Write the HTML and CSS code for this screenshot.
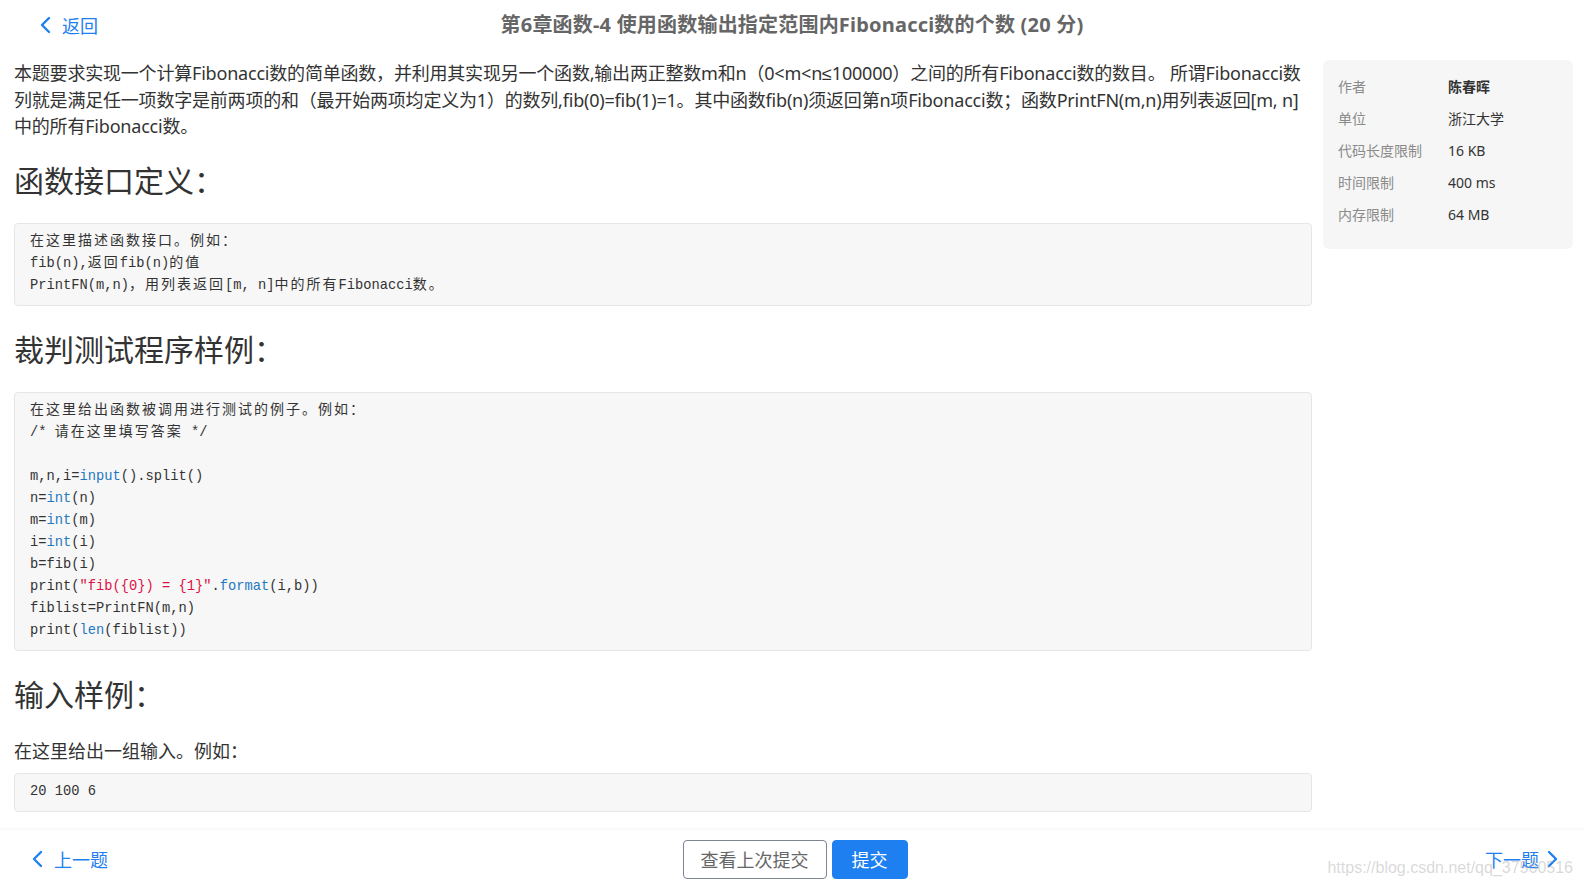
FILE: index.html
```html
<!DOCTYPE html>
<html lang="zh-CN">
<head>
<meta charset="utf-8">
<title>第6章函数-4 使用函数输出指定范围内Fibonacci数的个数</title>
<link rel="stylesheet" href="styles.css">
</head>
<body>
<div class="page">
  <header class="topbar">
    <a class="back-link" href="#">
      <svg class="chev" width="11" height="18" viewBox="0 0 11 18"><polyline points="9,2 2,9 9,16" fill="none" stroke="currentColor" stroke-width="2.4" stroke-linecap="round" stroke-linejoin="round"/></svg>
      <span>返回</span>
    </a>
    <h1 class="title">第6章函数-4 使用函数输出指定范围内Fibonacci数的个数 (20 分)</h1>
    <div></div>
  </header>

  <div class="content">
    <main class="problem">
      <p class="text lead">本题要求实现一个计算Fibonacci数的简单函数，并利用其实现另一个函数,输出两正整数m和n（0&lt;m&lt;n<span class="sym">≤</span>100000）之间的所有Fibonacci数的数目。 所谓Fibonacci数列就是满足任一项数字是前两项的和（最开始两项均定义为1）的数列,fib(0)=fib(1)=1。其中函数fib(n)须返回第n项Fibonacci数；函数PrintFN(m,n)用列表返回[m, n]中的所有Fibonacci数。</p>

      <h2 class="section">函数接口定义<span class="colon">：</span></h2>
      <pre class="code"><span class="zh">在这里描述函数接口。例如：</span>
fib(n),<span class="zh">返回</span>fib(n)<span class="zh">的值</span>
PrintFN(m,n)<span class="zh">，用列表返回</span>[m, n]<span class="zh">中的所有</span>Fibonacci<span class="zh">数。</span></pre>

      <h2 class="section">裁判测试程序样例<span class="colon">：</span></h2>
      <pre class="code"><span class="zh">在这里给出函数被调用进行测试的例子。例如：</span>
/* <span class="zh">请在这里填写答案</span> */

m,n,i=<span class="bi">input</span>().split()
n=<span class="bi">int</span>(n)
m=<span class="bi">int</span>(m)
i=<span class="bi">int</span>(i)
b=fib(i)
print(<span class="str">"fib({0}) = {1}"</span>.<span class="bi">format</span>(i,b))
fiblist=PrintFN(m,n)
print(<span class="bi">len</span>(fiblist))</pre>

      <h2 class="section">输入样例<span class="colon">：</span></h2>
      <p class="text sample-desc">在这里给出一组输入。例如：</p>
      <pre class="code">20 100 6</pre>
    </main>

    <aside class="info">
      <dl class="info-list">
        <div class="info-row"><dt>作者</dt><dd class="strong">陈春晖</dd></div>
        <div class="info-row"><dt>单位</dt><dd>浙江大学</dd></div>
        <div class="info-row"><dt>代码长度限制</dt><dd>16 KB</dd></div>
        <div class="info-row"><dt>时间限制</dt><dd>400 ms</dd></div>
        <div class="info-row"><dt>内存限制</dt><dd>64 MB</dd></div>
      </dl>
    </aside>
  </div>

  <footer class="bottombar">
    <a class="nav-link prev" href="#">
      <svg class="chev" width="11" height="18" viewBox="0 0 11 18"><polyline points="9,2 2,9 9,16" fill="none" stroke="currentColor" stroke-width="2.4" stroke-linecap="round" stroke-linejoin="round"/></svg>
      <span>上一题</span>
    </a>
    <div class="actions">
      <button class="btn btn-default" type="button">查看上次提交</button>
      <button class="btn btn-primary" type="button">提交</button>
    </div>
    <a class="nav-link next" href="#">
      <span>下一题</span>
      <svg class="chev" width="11" height="18" viewBox="0 0 11 18"><polyline points="2,2 9,9 2,16" fill="none" stroke="currentColor" stroke-width="2.4" stroke-linecap="round" stroke-linejoin="round"/></svg>
    </a>
  </footer>

  <div class="watermark">https://blog.csdn.net/qq_37560516</div>
</div>
</body>
</html>
```

FILE: styles.css
```css
* { box-sizing: border-box; }

html, body {
  margin: 0;
  padding: 0;
  background: #ffffff;
}

body {
  font-family: "Noto Sans", "Noto Sans CJK SC", sans-serif;
  color: #333333;
}

.page {
  position: relative;
  height: 100vh;
  display: flex;
  flex-direction: column;
  overflow: hidden;
}

/* ---------- top bar ---------- */
.topbar {
  height: 50px;
  flex: none;
  display: grid;
  grid-template-columns: 1fr auto 1fr;
  align-items: center;
  padding: 0 40px;
}

.back-link {
  display: flex;
  align-items: center;
  gap: 11px;
  color: #1f80f0;
  text-decoration: none;
  font-size: 18px;
  line-height: 24px;
  font-family: "Noto Sans CJK SC", sans-serif;
}

.chev { display: block; flex: none; }

.title {
  margin: 0;
  font-size: 20px;
  font-weight: 700;
  color: #666666;
  line-height: 50px;
  letter-spacing: 0.2px;
  white-space: nowrap;
  font-family: "Noto Sans", "Noto Sans CJK SC", sans-serif;
}

/* ---------- content ---------- */
.content {
  flex: 1;
  min-height: 0;
  display: flex;
  gap: 11px;
  padding: 10px 11px 0 14px;
}

.problem {
  flex: 1;
  min-width: 0;
}

.text {
  margin: 0;
  font-size: 18px;
  line-height: 26px;
  color: #333333;
}

.lead {
  letter-spacing: -0.2px;
}

.sym {
  font-family: "Liberation Sans", Arial, sans-serif;
}

.section {
  margin: 19px 0 23px;
  font-size: 30px;
  line-height: 42px;
  font-weight: 400;
  color: #333333;
  font-family: "Noto Sans CJK SC", sans-serif;
}

.code + .section {
  margin-top: 21px;
}

.section .colon {
  font-family: "Noto Sans CJK TC", "Noto Sans CJK SC", sans-serif;
}

.sample-desc {
  margin: 24px 0 9px;
}

.code {
  margin: 0;
  padding: 7px 15px 8px;
  background: #f7f7f7;
  border: 1px solid #e6e6e6;
  border-radius: 4px;
  font-family: "Liberation Mono", "Noto Sans CJK SC", monospace;
  font-size: 13.75px;
  line-height: 22px;
  color: #333333;
  white-space: pre;
  overflow: hidden;
}

.code .zh {
  font-family: "Noto Sans CJK SC", sans-serif;
  font-size: 14px;
  line-height: 14px;
  letter-spacing: 2px;
}

.code .bi { color: #1f78c1; }
.code .str { color: #dd1144; }

/* ---------- info sidebar ---------- */
.info {
  flex: none;
  width: 250px;
  align-self: flex-start;
  background: #f6f6f6;
  border-radius: 6px;
  padding: 10px 15px 19px;
}

.info-list { margin: 0; }

.info-row {
  display: flex;
  height: 32px;
  align-items: center;
  font-size: 14px;
  font-family: "Noto Sans", "Noto Sans CJK SC", sans-serif;
}

.info-row dt {
  width: 110px;
  color: #8a8a8a;
}

.info-row dd {
  margin: 0;
  color: #333333;
}

.info-row dd.strong { font-weight: 700; }

/* ---------- bottom bar ---------- */
.bottombar {
  height: 58px;
  flex: none;
  display: grid;
  grid-template-columns: 1fr auto 1fr;
  align-items: center;
  padding: 0 26px 0 32px;
  background: #ffffff;
  box-shadow: 0 -2px 3px rgba(0, 0, 0, 0.035);
}

.nav-link {
  display: flex;
  align-items: center;
  gap: 11px;
  color: #1f80f0;
  text-decoration: none;
  font-size: 18px;
  line-height: 24px;
  font-family: "Noto Sans CJK SC", sans-serif;
}

.nav-link.next {
  justify-self: end;
  gap: 8px;
}

.actions {
  display: flex;
  gap: 5px;
}

.btn {
  height: 39px;
  border-radius: 4px;
  font-size: 18px;
  font-family: "Noto Sans CJK SC", sans-serif;
  line-height: 1;
  cursor: pointer;
}

.btn-default {
  padding: 0 17px;
  background: #ffffff;
  border: 1px solid #7d8590;
  color: #666666;
}

.btn-primary {
  padding: 0 19px;
  background: #1e80f0;
  border: 1px solid #1e80f0;
  color: #ffffff;
}

/* ---------- watermark overlay ---------- */
.watermark {
  position: absolute;
  right: 11px;
  bottom: 11px;
  font-family: "Liberation Sans", Arial, sans-serif;
  font-size: 16px;
  line-height: 18px;
  color: rgba(170, 170, 170, 0.45);
  pointer-events: none;
}
```
